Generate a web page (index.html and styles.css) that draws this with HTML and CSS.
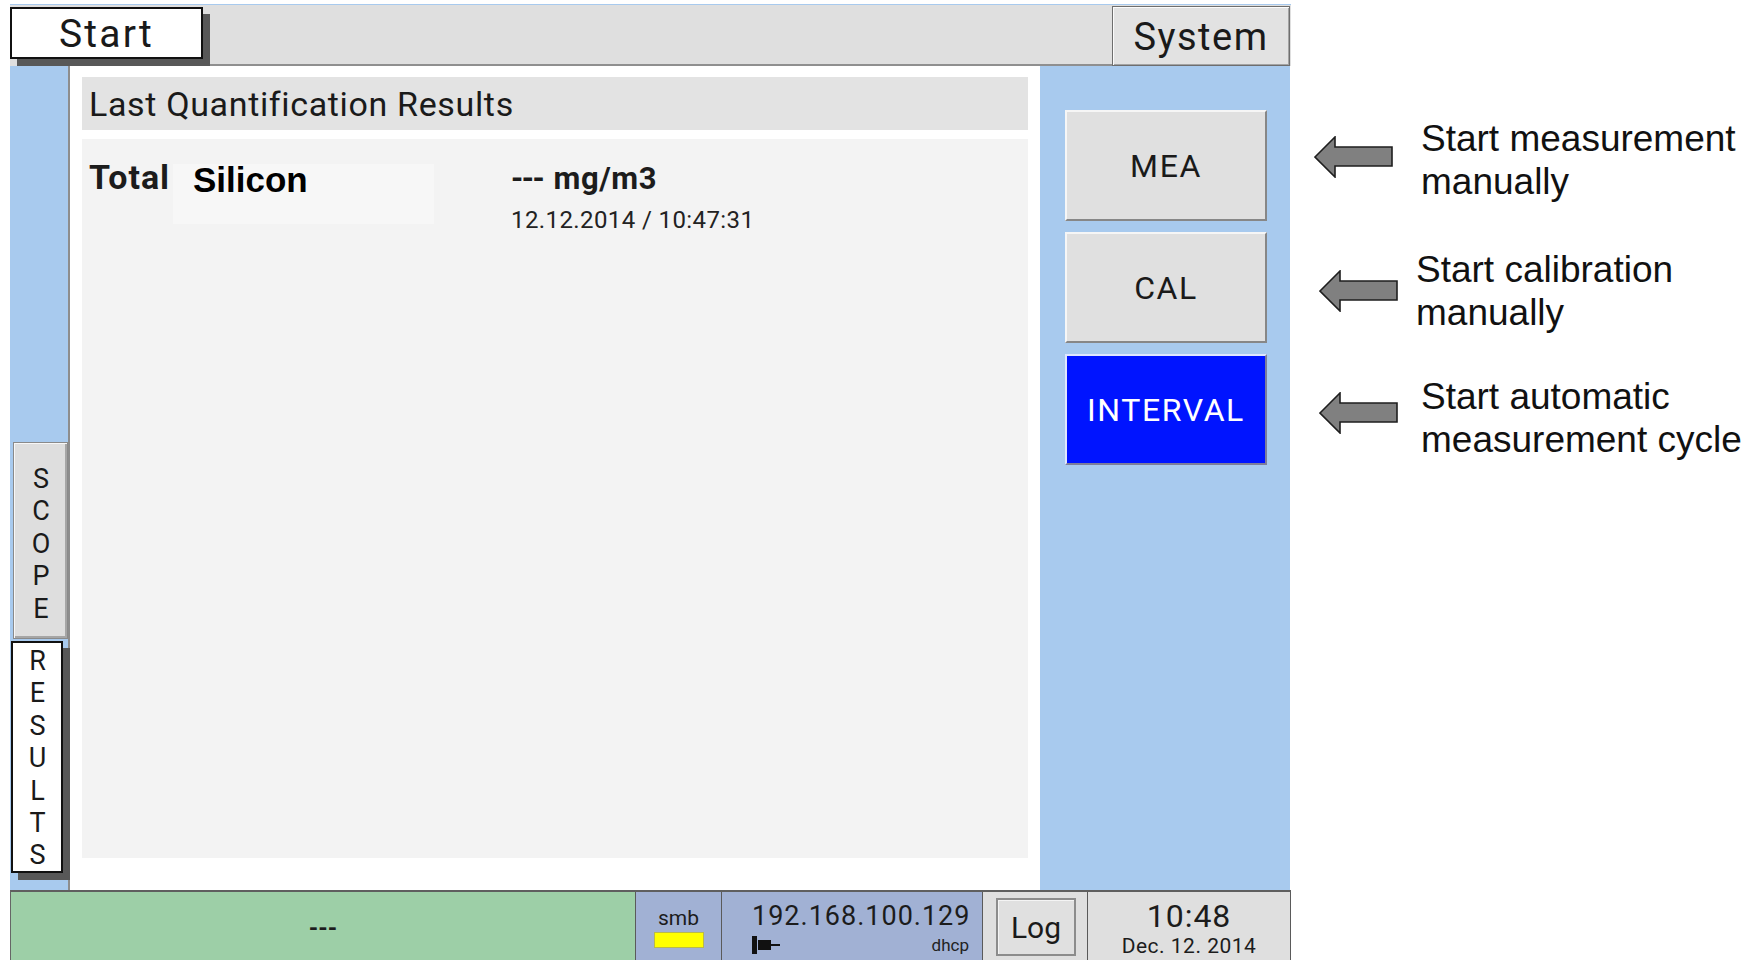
FILE: index.html
```html
<!DOCTYPE html>
<html lang="en">
<head>
<meta charset="utf-8">
<title>Start</title>
<link rel="stylesheet" href="styles.css">
</head>
<body>
<div class="page">
  <div class="device">
    <header class="tabbar">
      <div class="tab tab-start">Start</div>
      <div class="tabbar-fill"></div>
      <div class="tab tab-system">System</div>
    </header>

    <div class="main">
      <nav class="side">
        <div class="vtab vtab-scope">SCOPE</div>
        <div class="vtab vtab-results">RESULTS</div>
      </nav>

      <section class="panel">
        <div class="panel-title">Last Quantification Results</div>
        <div class="results">
          <div class="result-row">
            <div class="result-label">Total</div>
            <div class="result-value">
              <div class="value-main"><span class="value-dash">---</span> mg/m3</div>
              <div class="value-time">12.12.2014 / 10:47:31</div>
            </div>
          </div>
          <div class="label-patch">Silicon</div>
        </div>
      </section>

      <aside class="actions">
        <button class="action">MEA</button>
        <button class="action">CAL</button>
        <button class="action action-active">INTERVAL</button>
      </aside>
    </div>

    <footer class="status">
      <div class="cell cell-msg">---</div>
      <div class="cell cell-smb">
        <span class="smb-label">smb</span>
        <span class="smb-led"></span>
      </div>
      <div class="cell cell-net">
        <div class="net-ip">192.168.100.129</div>
        <div class="net-sub">
          <svg class="plug" width="31" height="18" viewBox="0 0 31 18">
            <rect x="0" y="0" width="5" height="18" fill="#111"/>
            <rect x="6" y="4" width="13" height="10" fill="#111"/>
            <rect x="19" y="8" width="9" height="2" fill="#111"/>
          </svg>
          <span class="net-mode">dhcp</span>
        </div>
      </div>
      <div class="cell cell-log">
        <button class="log-btn">Log</button>
      </div>
      <div class="cell cell-clock">
        <div class="clock-time">10:48</div>
        <div class="clock-date">Dec. 12. 2014</div>
      </div>
    </footer>
  </div>

  <div class="notes">
    <div class="note note-a">
      <svg class="arrow" width="80" height="42" viewBox="0 0 80 42">
        <polygon points="1,21 21,1 21,11 78,11 78,30 21,30 21,41" fill="#808080" stroke="#1e1e1e" stroke-width="1.6" stroke-linejoin="miter"/>
      </svg>
      <p class="note-text">Start measurement<br>manually</p>
    </div>
    <div class="note note-b">
      <svg class="arrow" width="80" height="42" viewBox="0 0 80 42">
        <polygon points="1,21 21,1 21,11 78,11 78,30 21,30 21,41" fill="#808080" stroke="#1e1e1e" stroke-width="1.6" stroke-linejoin="miter"/>
      </svg>
      <p class="note-text">Start calibration<br>manually</p>
    </div>
    <div class="note note-c">
      <svg class="arrow" width="80" height="42" viewBox="0 0 80 42">
        <polygon points="1,21 21,1 21,11 78,11 78,30 21,30 21,41" fill="#808080" stroke="#1e1e1e" stroke-width="1.6" stroke-linejoin="miter"/>
      </svg>
      <p class="note-text">Start automatic<br>measurement cycle</p>
    </div>
  </div>
</div>
</body>
</html>
```

FILE: styles.css
```css
* {
  box-sizing: border-box;
}

html,
body {
  margin: 0;
  padding: 0;
}

body {
  width: 1758px;
  height: 960px;
  overflow: hidden;
  background: #ffffff;
  color: #1c1c1c;
  font-family: Roboto, "Open Sans", sans-serif;
}

.page {
  display: flex;
  height: 960px;
}

/* ---------- device screen ---------- */

.device {
  width: 1281px;
  margin-left: 10px;
  padding-top: 4px;
  height: 960px;
  display: flex;
  flex-direction: column;
  flex-shrink: 0;
}

.tabbar {
  height: 62px;
  display: flex;
  align-items: stretch;
  background: #dfdfdf;
  border-top: 1px solid #a8caee;
}

.tab {
  display: flex;
  align-items: center;
  justify-content: center;
  font-size: 38px;
  color: #1a1a1a;
}

.tab-start {
  position: relative;
  z-index: 1;
  width: 193px;
  margin: 2px 0 7px 0;
  background: #ffffff;
  border: 2px solid #111111;
  box-shadow: 7px 7px 0 #585858;
  padding-top: 2px;
  font-size: 39px;
  letter-spacing: 2.2px;
}

.tabbar-fill {
  flex: 1;
  border-bottom: 2px solid #8f8f8f;
}

.tab-system {
  width: 178px;
  margin: 1px 1px 0 0;
  background: #e2e2e2;
  border: 1px solid #6e6e6e;
  box-shadow: inset 1px 1px 0 #fbfbfb, inset -1px -1px 0 #a3a3a3;
  padding-top: 2px;
  letter-spacing: 1.5px;
}

.main {
  flex: 1;
  display: flex;
  min-height: 0;
}

/* left tab strip */
.side {
  width: 58px;
  background: #a8caee;
  display: flex;
  flex-direction: column;
  justify-content: flex-end;
  align-items: flex-start;
  padding-bottom: 17px;
}

.vtab {
  writing-mode: vertical-lr;
  text-orientation: upright;
  font-size: 27px;
  letter-spacing: 0.4px;
  line-height: 1;
  display: flex;
  align-items: center;
  justify-content: center;
  color: #1a1a1a;
}

.vtab-scope {
  width: 55px;
  height: 197px;
  margin-left: 3px;
  margin-bottom: 2px;
  background: #dedede;
  border: 1px solid #8a8a8a;
  box-shadow: inset 1px 1px 0 #f7f7f7, inset -2px -2px 0 #a6a6a6;
  padding-top: 6px;
}

.vtab-results {
  position: relative;
  z-index: 1;
  width: 52px;
  height: 232px;
  margin-left: 1px;
  background: #ffffff;
  border: 2px solid #111111;
  box-shadow: 7px 7px 0 #585858;
  padding-top: 2px;
}

/* centre panel */
.panel {
  width: 972px;
  background: #ffffff;
  border-left: 2px solid #8d8d8d;
  padding: 11px 12px 32px 12px;
  display: flex;
  flex-direction: column;
  gap: 9px;
}

.panel-title {
  height: 53px;
  background: #e3e3e3;
  display: flex;
  align-items: center;
  padding-left: 7px;
  font-size: 34px;
  letter-spacing: 0.65px;
  color: #1a1a1a;
}

.results {
  position: relative;
  flex: 1;
  background: #f3f3f3;
  padding: 18px 0 0 7px;
}

.result-row {
  display: flex;
  align-items: baseline;
}

.result-label {
  width: 422px;
  font-size: 34px;
  font-weight: 700;
  line-height: 40px;
  letter-spacing: 1px;
}

.value-main {
  font-size: 31px;
  font-weight: 700;
  line-height: 34px;
  letter-spacing: 0.6px;
}

.value-dash {
  letter-spacing: -1.5px;
  margin-right: 2px;
}

.value-time {
  margin-top: 4px;
  font-size: 24px;
  line-height: 40px;
  letter-spacing: 0.4px;
  color: #222;
}

/* label box laid over the row label */
.label-patch {
  position: absolute;
  left: 91px;
  top: 25px;
  width: 261px;
  height: 60px;
  background: #f7f7f7;
  padding: 1px 0 0 20px;
  font-family: "Liberation Sans", Arial, sans-serif;
  font-weight: 700;
  font-size: 35px;
  line-height: 30px;
  color: #000;
}

/* right action column */
.actions {
  width: 250px;
  background: #a8caee;
  padding: 44px 23px 0 25px;
  display: flex;
  flex-direction: column;
  gap: 11px;
}

.action {
  height: 111px;
  width: 100%;
  margin: 0;
  background: #e0e0e0;
  border: 2px solid;
  border-color: #f6f6f6 #878787 #878787 #f6f6f6;
  font-family: Roboto, "Open Sans", sans-serif;
  font-size: 32px;
  letter-spacing: 1.6px;
  color: #1a1a1a;
  padding: 0;
}

.action-active {
  background: #0014ff;
  color: #ffffff;
  border-color: #dfe6ff #7d7d9a #7d7d9a #dfe6ff;
}

/* ---------- status bar ---------- */

.status {
  height: 70px;
  display: flex;
  border-top: 2px solid #5f5f5f;
  border-left: 1px solid #666;
}

.cell {
  border-right: 1px solid #5a5a5a;
  flex-shrink: 0;
}

.cell-msg {
  width: 625px;
  background: #9dcfa7;
  display: flex;
  align-items: center;
  justify-content: center;
  font-size: 24px;
  font-weight: 700;
  padding-top: 4px;
}

.cell-smb {
  width: 86px;
  background: #a1b1d4;
  display: flex;
  flex-direction: column;
  align-items: center;
  padding-top: 14px;
}

.smb-label {
  font-size: 21px;
  line-height: 24px;
}

.smb-led {
  margin-top: 2px;
  width: 50px;
  height: 16px;
  background: #ffff00;
  border: 1px solid #b9b94a;
}

.cell-net {
  width: 261px;
  background: #a1b1d4;
  padding: 10px 13px 0 30px;
}

.net-ip {
  text-align: right;
  font-size: 27px;
  line-height: 28px;
  letter-spacing: 1px;
  margin-right: -1px;
}

.net-sub {
  display: flex;
  justify-content: space-between;
  align-items: flex-end;
  height: 27px;
}

.plug {
  display: block;
  margin-bottom: 3px;
}

.net-mode {
  font-size: 17px;
  line-height: 20px;
  color: #222;
  margin-bottom: 2px;
}

.cell-log {
  width: 105px;
  background: #dfdfdf;
  padding: 6px 0 0 13px;
}

.log-btn {
  width: 80px;
  height: 58px;
  margin: 0;
  padding: 0;
  background: #e0e0e0;
  border: 2px solid #8c8c8c;
  box-shadow: inset 1px 1px 0 #f4f4f4;
  font-family: Roboto, "Open Sans", sans-serif;
  font-size: 30px;
  color: #1a1a1a;
}

.cell-clock {
  flex: 1;
  flex-shrink: 1;
  background: #dfdfdf;
  display: flex;
  flex-direction: column;
  align-items: center;
  padding-top: 8px;
}

.clock-time {
  font-size: 32px;
  line-height: 32px;
  letter-spacing: 1px;
}

.clock-date {
  margin-top: 3px;
  font-size: 21px;
  line-height: 22px;
  letter-spacing: 0.5px;
}

/* ---------- annotations ---------- */

.notes {
  flex: 1;
  display: flex;
  flex-direction: column;
  padding-top: 117px;
}

.note {
  display: flex;
  align-items: center;
}

.note-a {
  padding-left: 23px;
  gap: 27px;
}

.note-b {
  margin-top: 45px;
  padding-left: 28px;
  gap: 17px;
}

.note-c {
  margin-top: 41px;
  padding-left: 28px;
  gap: 22px;
}

.note-a .arrow {
  margin-bottom: 7px;
}

.note-c .arrow {
  margin-bottom: 10px;
}

.arrow {
  display: block;
  flex-shrink: 0;
}

.note-text {
  margin: 0;
  font-family: "Liberation Sans", Arial, sans-serif;
  font-size: 37px;
  line-height: 43px;
  color: #111;
  white-space: nowrap;
}
```
